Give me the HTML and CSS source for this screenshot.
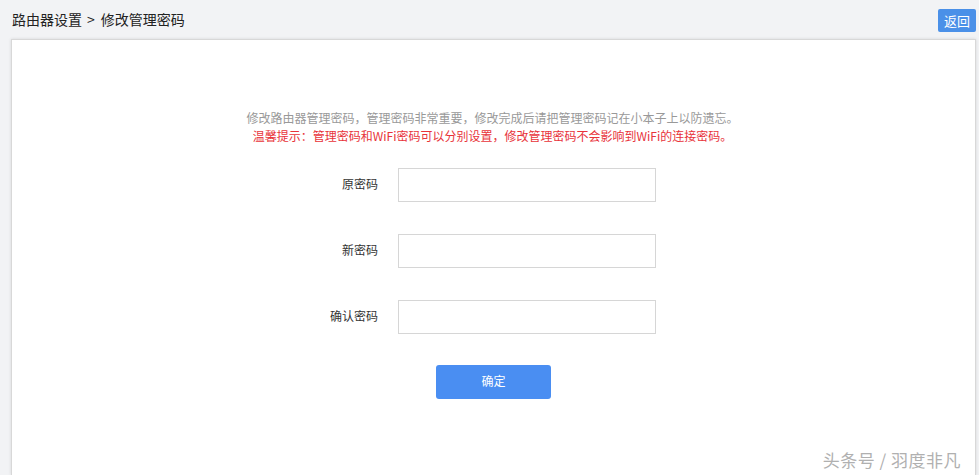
FILE: index.html
```html
<!DOCTYPE html>
<html lang="zh">
<head>
<meta charset="utf-8">
<title>修改管理密码</title>
<link rel="stylesheet" href="styles.css">
</head>
<body>
<div class="page">
  <header class="topbar">
    <div class="crumb">路由器设置<span class="sep">&gt;</span>修改管理密码</div>
    <button class="back-btn" type="button">返回</button>
  </header>
  <main class="card">
    <div class="intro">
      <p class="tip">修改路由器管理密码，管理密码非常重要，修改完成后请把管理密码记在小本子上以防遗忘。</p>
      <p class="warn">温馨提示：管理密码和WiFi密码可以分别设置，修改管理密码不会影响到WiFi的连接密码。</p>
    </div>
    <form class="form">
      <div class="row">
        <label class="label">原密码</label>
        <input class="field" type="password">
      </div>
      <div class="row">
        <label class="label">新密码</label>
        <input class="field" type="password">
      </div>
      <div class="row">
        <label class="label">确认密码</label>
        <input class="field" type="password">
      </div>
      <div class="actions">
        <button class="submit" type="button">确定</button>
      </div>
    </form>
  </main>
  <div class="watermark">头条号 / 羽度非凡</div>
</div>
</body>
</html>
```

FILE: styles.css
```css
* { box-sizing: border-box; }
html, body {
  margin: 0;
  padding: 0;
  height: 100%;
  overflow: hidden;
}
body {
  background: #f2f3f5;
  font-family: "Microsoft YaHei", "Noto Sans CJK SC", "Liberation Sans", sans-serif;
  color: #333;
}
.page {
  position: relative;
  height: 475px;
  display: flex;
  flex-direction: column;
  padding: 0 3px 0 11px;
}
.topbar {
  height: 39px;
  display: flex;
  align-items: flex-start;
  justify-content: space-between;
}
.crumb {
  font-size: 14px;
  line-height: 20px;
  margin-top: 9px;
  margin-left: 1px;
  color: #222;
}
.sep {
  margin: 0 6px 0 5px;
}
.back-btn {
  margin-top: 9px;
  width: 38px;
  height: 23px;
  border: none;
  border-radius: 2px;
  background: #4a90e8;
  color: #fff;
  font-family: inherit;
  font-size: 13px;
  padding: 0;
  line-height: 23px;
}
.card {
  flex: 1;
  background: #fff;
  border: 1px solid #d8d8d8;
  border-bottom: none;
  box-shadow: 0 0 3px rgba(0,0,0,0.12);
  padding-top: 69px;
}
.intro {
  text-align: center;
  font-size: 12px;
  line-height: 18px;
  padding-right: 2px;
}
.intro p { margin: 0; }
.tip { color: #999; }
.warn { color: #e8333a; }
.form {
  margin-top: 23px;
  display: flex;
  flex-direction: column;
  gap: 32px;
}
.row {
  display: flex;
  align-items: center;
}
.label {
  width: 366px;
  text-align: right;
  font-size: 12px;
  line-height: 16px;
  color: #333;
  margin-right: 20px;
  margin-top: -2px;
}
.field {
  width: 258px;
  height: 34px;
  border: 1px solid #d6d6d6;
  border-radius: 0;
  background: #fff;
  outline: none;
  padding: 0 8px;
}
.actions {
  display: flex;
  padding-left: 424px;
  margin-top: -1px;
}
.submit {
  width: 115px;
  height: 34px;
  border: none;
  border-radius: 3px;
  background: #4a8ef2;
  color: #fff;
  font-family: inherit;
  font-size: 12px;
  line-height: 32px;
  padding: 0 0 2px;
}
.watermark {
  position: absolute;
  right: 18px;
  bottom: 4px;
  font-size: 17px;
  line-height: 22px;
  color: #b0b0b0;
  letter-spacing: 0.5px;
  text-shadow: 0 0 2px #fff;
}
```
